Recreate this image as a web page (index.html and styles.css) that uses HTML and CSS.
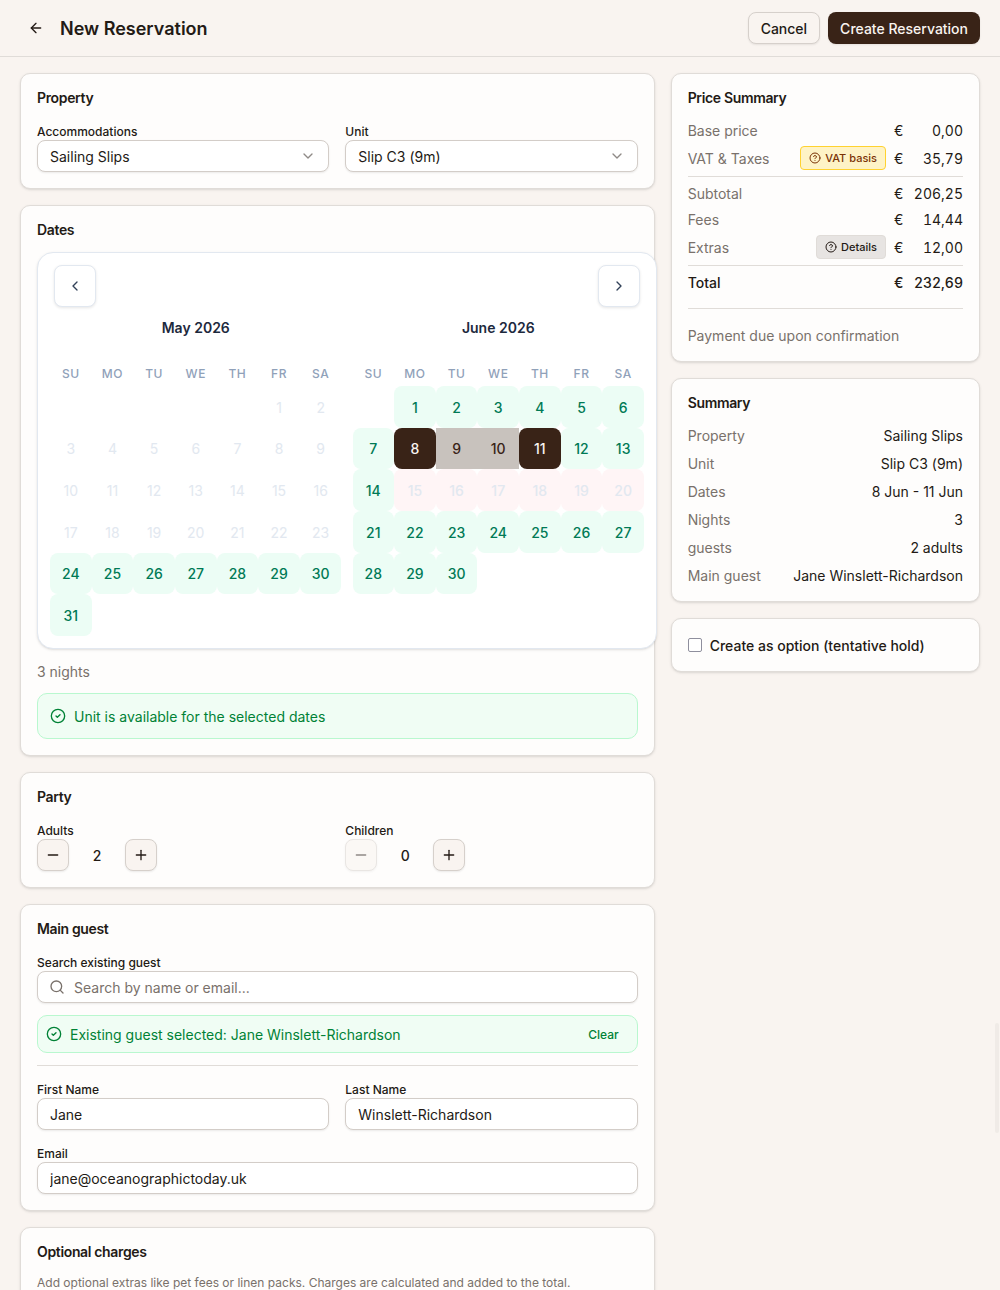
FILE: index.html
```html
<!DOCTYPE html>
<html lang="en">
<head>
    <meta charset="UTF-8">
    <meta name="viewport" content="width=device-width, initial-scale=1.0">
    <title>New Reservation</title>
    <link rel="stylesheet" href="styles.css">
</head>
<body>
    <!-- Icon set -->
    <svg class="sprite" aria-hidden="true">
        <symbol id="i-arrow-left" viewBox="0 0 24 24"><path d="m12 19-7-7 7-7"/><path d="M19 12H5"/></symbol>
        <symbol id="i-chevron-down" viewBox="0 0 24 24"><path d="m6 9 6 6 6-6"/></symbol>
        <symbol id="i-chevron-left" viewBox="0 0 24 24"><path d="m15 18-6-6 6-6"/></symbol>
        <symbol id="i-chevron-right" viewBox="0 0 24 24"><path d="m9 18 6-6-6-6"/></symbol>
        <symbol id="i-check" viewBox="0 0 24 24"><circle cx="12" cy="12" r="10"/><path d="m9 12 2 2 4-4"/></symbol>
        <symbol id="i-help" viewBox="0 0 24 24"><circle cx="12" cy="12" r="10"/><path d="M9.09 9a3 3 0 0 1 5.83 1c0 2-3 3-3 3"/><path d="M12 17h.01"/></symbol>
        <symbol id="i-minus" viewBox="0 0 24 24"><path d="M5 12h14"/></symbol>
        <symbol id="i-plus" viewBox="0 0 24 24"><path d="M5 12h14"/><path d="M12 5v14"/></symbol>
        <symbol id="i-search" viewBox="0 0 24 24"><circle cx="11" cy="11" r="8"/><path d="m21 21-4.3-4.3"/></symbol>
    </svg>

    <div class="page">
        <header class="topbar">
            <button type="button" class="back-btn" aria-label="Back"><svg class="icon"><use href="#i-arrow-left"/></svg></button>
            <h1>New Reservation</h1>
            <button type="button" class="btn">Cancel</button>
            <button type="submit" class="btn btn-primary" form="reservationForm">Create Reservation</button>
        </header>

        <div class="layout">
            <form id="reservationForm" class="column main">
                <section class="card">
                    <h2>Property</h2>
                    <div class="row">
                        <div class="field">
                            <label for="accommodation">Accommodations</label>
                            <div class="control">
                                <select id="accommodation"><option>Sailing Slips</option></select>
                                <svg class="icon chevron"><use href="#i-chevron-down"/></svg>
                            </div>
                        </div>
                        <div class="field">
                            <label for="unit">Unit</label>
                            <div class="control">
                                <select id="unit"><option>Slip C3 (9m)</option></select>
                                <svg class="icon chevron"><use href="#i-chevron-down"/></svg>
                            </div>
                        </div>
                    </div>
                </section>

                <section class="card">
                    <h2>Dates</h2>
                    <div class="stack">
                        <div class="calendar">
                            <div class="calendar-nav">
                                <button type="button" aria-label="Previous month"><svg class="icon"><use href="#i-chevron-left"/></svg></button>
                                <button type="button" aria-label="Next month"><svg class="icon"><use href="#i-chevron-right"/></svg></button>
                            </div>
                            <div class="months" id="months">
                                <!-- months are rendered by the script below -->
                            </div>
                        </div>
                        <p class="line muted">3 nights</p>
                        <div class="notice">
                            <svg class="icon"><use href="#i-check"/></svg>
                            <span class="line">Unit is available for the selected dates</span>
                        </div>
                    </div>
                </section>

                <section class="card">
                    <h2>Party</h2>
                    <div class="row">
                        <div class="field">
                            <label for="adults">Adults</label>
                            <div class="stepper">
                                <button type="button" aria-label="Fewer adults"><svg class="icon"><use href="#i-minus"/></svg></button>
                                <output id="adults">2</output>
                                <button type="button" aria-label="More adults"><svg class="icon"><use href="#i-plus"/></svg></button>
                            </div>
                        </div>
                        <div class="field">
                            <label for="children">Children</label>
                            <div class="stepper">
                                <button type="button" aria-label="Fewer children" disabled><svg class="icon"><use href="#i-minus"/></svg></button>
                                <output id="children">0</output>
                                <button type="button" aria-label="More children"><svg class="icon"><use href="#i-plus"/></svg></button>
                            </div>
                        </div>
                    </div>
                </section>

                <section class="card">
                    <h2>Main guest</h2>
                    <div class="stack">
                        <div class="field">
                            <label for="guestSearch">Search existing guest</label>
                            <div class="control">
                                <svg class="icon search-icon"><use href="#i-search"/></svg>
                                <input type="text" id="guestSearch" class="with-icon" placeholder="Search by name or email...">
                            </div>
                        </div>
                        <div class="notice notice-small">
                            <svg class="icon"><use href="#i-check"/></svg>
                            <span class="line">Existing guest selected: Jane Winslett-Richardson</span>
                            <button type="button" class="line clear-btn">Clear</button>
                        </div>
                        <hr>
                        <div class="row">
                            <div class="field">
                                <label for="firstName">First Name</label>
                                <input type="text" id="firstName" value="Jane">
                            </div>
                            <div class="field">
                                <label for="lastName">Last Name</label>
                                <input type="text" id="lastName" value="Winslett-Richardson">
                            </div>
                        </div>
                        <div class="field">
                            <label for="email">Email</label>
                            <input type="email" id="email" value="jane@oceanographictoday.uk">
                        </div>
                    </div>
                </section>

                <section class="card">
                    <h2>Optional charges</h2>
                    <p class="hint">Add optional extras like pet fees or linen packs. Charges are calculated and added to the total.</p>
                </section>
            </form>

            <aside class="column">
                <section class="card">
                    <h2>Price Summary</h2>
                    <div class="prices">
                        <div class="price"><span class="line">Base price</span><span class="line amount"><span>€</span><span>0,00</span></span></div>
                        <div class="price">
                            <span class="line">VAT &amp; Taxes</span>
                            <button type="button" class="badge badge-yellow"><svg class="icon"><use href="#i-help"/></svg>VAT basis</button>
                            <span class="line amount"><span>€</span><span>35,79</span></span>
                        </div>
                        <hr>
                        <div class="price"><span class="line">Subtotal</span><span class="line amount"><span>€</span><span>206,25</span></span></div>
                        <div class="price"><span class="line">Fees</span><span class="line amount"><span>€</span><span>14,44</span></span></div>
                        <div class="price">
                            <span class="line">Extras</span>
                            <button type="button" class="badge"><svg class="icon"><use href="#i-help"/></svg>Details</button>
                            <span class="line amount"><span>€</span><span>12,00</span></span>
                        </div>
                        <hr>
                        <div class="price total"><span class="line">Total</span><span class="line amount"><span>€</span><span>232,69</span></span></div>
                    </div>
                    <div class="payment muted"><p class="line">Payment due upon confirmation</p></div>
                </section>

                <section class="card">
                    <h2>Summary</h2>
                    <dl class="summary">
                        <div class="line"><dt>Property</dt><dd>Sailing Slips</dd></div>
                        <div class="line"><dt>Unit</dt><dd>Slip C3 (9m)</dd></div>
                        <div class="line"><dt>Dates</dt><dd>8 Jun - 11 Jun</dd></div>
                        <div class="line"><dt>Nights</dt><dd>3</dd></div>
                        <div class="line"><dt>guests</dt><dd>2 adults</dd></div>
                        <div class="line"><dt>Main guest</dt><dd>Jane Winslett-Richardson</dd></div>
                    </dl>
                </section>

                <section class="card">
                    <div class="option">
                        <input type="checkbox" id="tentative">
                        <label class="line" for="tentative">Create as option (tentative hold)</label>
                    </div>
                </section>
            </aside>
        </div>
    </div>
    <div class="scroll-thumb" aria-hidden="true"></div>

    <script>
        const weekdays = ['SU', 'MO', 'TU', 'WE', 'TH', 'FR', 'SA'];

        // offset = weekday of the first day
        const months = [
            { name: 'May 2026', offset: 5, days: 31, state: d => d < 24 ? 'past' : 'free' },
            { name: 'June 2026', offset: 1, days: 30, state: juneState }
        ];

        function juneState(day) {
            if (day === 8 || day === 11) return 'selected';
            if (day > 8 && day < 11) return 'in-range';
            if (day >= 15 && day <= 20) return 'booked';
            return 'free';
        }

        function renderMonth(month) {
            let cells = weekdays.map(w => `<span class="weekday">${w}</span>`).join('');
            for (let day = 1; day <= month.days; day++) {
                const state = month.state(day);
                const first = day === 1 ? ` style="grid-column-start: ${month.offset + 1}"` : '';
                const disabled = state === 'past' || state === 'booked' ? ' disabled' : '';
                cells += `<button type="button" class="day ${state}"${first}${disabled}>${day}</button>`;
            }
            return `<div class="month"><h3>${month.name}</h3><div class="days">${cells}</div></div>`;
        }

        document.getElementById('months').innerHTML = months.map(renderMonth).join('');
    </script>
</body>
</html>
```

FILE: styles.css
```css
* {
    box-sizing: border-box;
}
body {
    margin: 0;
    background-color: #f9f4f0;
    color: #231a15;
    font-family: Inter, sans-serif;
    font-size: 14px;
    line-height: 20px;
}
h1, h2, h3, p, dl, dd {
    margin: 0;
}
button, input, select {
    margin: 0;
    font: inherit;
    color: inherit;
}
button {
    display: flex;
    align-items: center;
    justify-content: center;
    padding: 0;
    cursor: pointer;
}
hr {
    width: 100%;
    margin: 0;
    border: 0;
    border-top: 1px solid #e0dcd8;
}
.sprite {
    display: none;
}
.icon {
    display: block;
    flex: none;
    width: 16px;
    height: 16px;
    fill: none;
    stroke: currentColor;
    stroke-width: 2;
    stroke-linecap: round;
    stroke-linejoin: round;
}
.page {
    height: 100vh;
    overflow: hidden auto;
    scrollbar-width: none;
}
.scroll-thumb {
    position: fixed;
    right: 1px;
    bottom: 157px;
    width: 4px;
    height: 110px;
    border-radius: 2px;
    background-color: #f0ebe7;
}

/* 20px text line */
.line {
    padding-top: 2px;
    line-height: 18px;
}

/* Header */
.topbar {
    display: flex;
    align-items: center;
    gap: 8px;
    padding: 12px 20px;
    border-bottom: 1px solid #e0dcd8;
}
.topbar h1 {
    flex: 1;
    padding-top: 2px;
    font-size: 18px;
    font-weight: 600;
}
.back-btn {
    width: 32px;
    height: 32px;
    border: none;
    background: none;
}
.btn {
    height: 32px;
    padding: 2px 12px 0;
    border: 1px solid #d6d0cb;
    border-radius: 8px;
    background-color: #f9f4f0;
    box-shadow: 0 1px 2px rgba(0, 0, 0, 0.08);
    font-weight: 500;
}
.btn-primary {
    border: none;
    background-color: #392317;
    color: #f9f4f0;
}

/* Layout */
.layout {
    display: grid;
    grid-template-columns: repeat(3, minmax(0, 1fr));
    align-items: start;
    gap: 16px;
    padding: 16px 20px;
}
.column {
    display: flex;
    flex-direction: column;
    gap: 16px;
}
.main {
    grid-column: span 2;
}
.card {
    padding: 16px;
    border: 1px solid #e0dcd8;
    border-radius: 10px;
    background-color: #fefdfc;
    box-shadow: 0 1px 3px rgba(0, 0, 0, 0.1), 0 1px 2px -1px rgba(0, 0, 0, 0.1);
}
.card h2 {
    margin-bottom: 14px;
    font-size: 14px;
    line-height: 16px;
    font-weight: 600;
    letter-spacing: -0.025em;
}
.stack {
    display: flex;
    flex-direction: column;
    gap: 12px;
}
.row {
    display: grid;
    grid-template-columns: 1fr 1fr;
    gap: 16px;
}
.muted {
    color: #79716b;
}
.hint {
    color: #79716b;
    font-size: 12px;
    line-height: 18px;
}

/* Form fields */
.field label {
    display: block;
    padding-top: 4px;
    font-size: 12px;
    line-height: 16px;
    font-weight: 500;
}
.control {
    position: relative;
}
.field input, .field select {
    display: block;
    width: 100%;
    height: 32px;
    padding: 2px 12px 0;
    border: 1px solid #d3cdc8;
    border-radius: 8px;
    background-color: #fff;
    box-shadow: 0 1px 2px rgba(0, 0, 0, 0.08);
    appearance: none;
}
.field input.with-icon {
    padding-left: 36px;
}
.field input::placeholder {
    color: #79716b;
    opacity: 1;
}
.chevron {
    position: absolute;
    top: 8px;
    right: 13px;
    color: #8f8a87;
    pointer-events: none;
}
.search-icon {
    position: absolute;
    top: 8px;
    left: 12px;
    color: #79716b;
}
.stepper {
    display: flex;
    gap: 12px;
}
.stepper button {
    width: 32px;
    height: 32px;
    border: 1px solid #d6d0cb;
    border-radius: 8px;
    background-color: #f9f4f0;
    box-shadow: 0 1px 2px rgba(0, 0, 0, 0.08);
}
.stepper button:disabled {
    opacity: 0.5;
}
.stepper output {
    width: 32px;
    padding-top: 2px;
    line-height: 30px;
    font-weight: 500;
    text-align: center;
}
.notice {
    display: flex;
    align-items: center;
    gap: 8px;
    padding: 12px;
    border: 1px solid #b9f8cf;
    border-radius: 10px;
    background-color: #f0fdf4;
    color: #008236;
}
.notice-small {
    padding: 8px;
}
.clear-btn {
    margin-left: auto;
    padding: 2px 10px 0;
    border: none;
    background: none;
    font-size: 12px;
    font-weight: 500;
}

/* Calendar, a bit wider than the card content */
.calendar {
    width: 620px;
    padding: 12px;
    border: 1px solid #e2e8f0;
    border-radius: 16px;
    background-color: #fff;
    box-shadow: 0 1px 3px rgba(0, 0, 0, 0.1), 0 1px 2px -1px rgba(0, 0, 0, 0.1);
}
.calendar-nav {
    display: flex;
    justify-content: space-between;
    padding: 0 4px;
}
.calendar-nav button {
    width: 42px;
    height: 42px;
    border: 1px solid #e2e8f0;
    border-radius: 8px;
    background-color: #fff;
    box-shadow: 0 1px 3px rgba(0, 0, 0, 0.1);
    color: #314158;
}
.months {
    display: grid;
    grid-template-columns: 1fr 1fr;
    gap: 11px;
}
.month h3 {
    margin-bottom: 12px;
    color: #1d293d;
    font-size: 14px;
    line-height: 42px;
    font-weight: 600;
    text-align: center;
}
.days {
    display: grid;
    grid-template-columns: repeat(7, 1fr);
}
.weekday {
    color: #90a1b9;
    font-size: 12px;
    line-height: 25px;
    font-weight: 500;
    letter-spacing: 0.05em;
    text-align: center;
}
.day {
    aspect-ratio: 1;
    padding-top: 2px;
    border: none;
    border-radius: 8px;
    background: none;
    font-weight: 500;
}
.day.past {
    color: #e2e8f0;
    font-weight: 400;
}
.day.free {
    background-color: #ecfdf5;
    color: #007a55;
}
.day.booked {
    background-color: #fff5f6;
    color: #e2e8f0;
}
.day.in-range {
    border-radius: 0;
    background-color: #c8c2bd;
    color: #392317;
}
.day.selected {
    background-color: #392317;
    color: #f9f4f0;
}

/* Price summary */
.prices {
    display: flex;
    flex-direction: column;
    gap: 6px;
}
.price {
    display: flex;
    align-items: center;
    gap: 8px;
    color: #79716b;
}
.price > span:first-child {
    flex: 1;
}
.price.total {
    color: #231a15;
    font-weight: 500;
}
.amount {
    display: flex;
    justify-content: space-between;
    width: 69px;
    color: #231a15;
    font-variant-numeric: tabular-nums;
}
.badge {
    gap: 4px;
    height: 24px;
    padding: 0 8px;
    border: 1px solid #e0dcd8;
    border-radius: 4px;
    background-color: #e7e4e2;
    color: #231a15;
    font-size: 11px;
    font-weight: 500;
}
.badge .icon {
    width: 12px;
    height: 12px;
}
.badge-yellow {
    border-color: #ffd230;
    background-color: #fef3c6;
    color: #7b3306;
}
.payment {
    margin-top: 16px;
    padding-top: 16px;
    border-top: 1px solid #e0dcd8;
}
.summary {
    display: flex;
    flex-direction: column;
    gap: 8px;
}
.summary div {
    display: flex;
    justify-content: space-between;
}
.summary dt {
    color: #79716b;
}
.option {
    display: flex;
    align-items: center;
    gap: 8px;
    font-weight: 500;
}
.option input {
    width: 14px;
    height: 14px;
    border: 1px solid #8f8f9d;
    border-radius: 2px;
    background-color: #fff;
    appearance: none;
}
```
